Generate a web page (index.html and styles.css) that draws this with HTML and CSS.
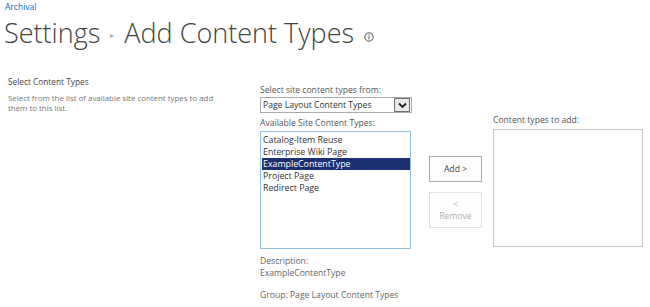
FILE: index.html
```html
<!DOCTYPE html>
<html lang="en">
<head>
    <meta charset="UTF-8">
    <meta name="viewport" content="width=device-width, initial-scale=1.0">
    <title>Add Content Types</title>
    <link rel="stylesheet" href="styles.css">
</head>
<body>
    <div class="crumb">Archival</div>
    <h1 class="title">
        <span>Settings</span>
        <span class="sep">&#9656;</span>
        <span>Add Content Types</span>
        <svg class="info" width="10" height="10" viewBox="0 0 10 10">
            <circle cx="5" cy="5" r="4.2" fill="none" stroke="#555" stroke-width="1"/>
            <rect x="4.5" y="4.2" width="1" height="3.2" fill="#555"/>
            <rect x="4.5" y="2.5" width="1" height="1" fill="#555"/>
        </svg>
    </h1>

    <div class="section">
        <div class="section-desc">
            <h3>Select Content Types</h3>
            <p>Select from the list of available site content types to add them to this list.</p>
        </div>
        <div class="section-body">
            <div class="pick">
                <div class="label">Select site content types from:</div>
                <div class="dropdown">
                    <span>Page Layout Content Types</span>
                    <span class="drop-btn">
                        <svg width="11" height="9" viewBox="0 0 11 9">
                            <path d="M2 2.5 L5.5 6 L9 2.5" fill="none" stroke="#222" stroke-width="1.8"/>
                        </svg>
                    </span>
                </div>
                <div class="label">Available Site Content Types:</div>
                <div class="listbox">
                    <div class="item">Catalog-Item Reuse</div>
                    <div class="item">Enterprise Wiki Page</div>
                    <div class="item selected">ExampleContentType</div>
                    <div class="item">Project Page</div>
                    <div class="item">Redirect Page</div>
                </div>
                <div class="meta">Description:<br>ExampleContentType</div>
                <div class="meta group">Group: Page Layout Content Types</div>
            </div>
            <div class="buttons">
                <button class="btn">Add &gt;</button>
                <button class="btn disabled">&lt;<br>Remove</button>
            </div>
            <div class="target">
                <div class="label">Content types to add:</div>
                <div class="listbox plain"></div>
            </div>
        </div>
    </div>
</body>
</html>
```

FILE: styles.css
```css
body {
    margin: 0;
    font-family: "Open Sans", sans-serif;
    color: #444;
    background: #fff;
}
.crumb {
    color: #0072c6;
    font-size: 8.5px;
    padding: 1px 0 0 5px;
}
.title {
    margin: 0;
    padding: 0 0 0 4px;
    font-weight: 300;
    font-size: 27px;
    line-height: 38px;
    color: #444;
    display: flex;
    align-items: center;
    gap: 8px;
}
.title .sep {
    font-size: 8px;
    color: #aaa;
    margin: 4px 2px 0;
}
.title .info {
    margin: 7px 0 0 2px;
}
.section {
    display: flex;
    margin-top: 22px;
}
.section-desc {
    width: 236px;
    padding-left: 8px;
    margin-right: 16px;
}
.section-desc h3 {
    margin: 0;
    font-weight: normal;
    font-size: 8.3px;
    color: #444;
    line-height: 11px;
}
.section-desc p {
    margin: 6px 0 0;
    font-size: 7.9px;
    line-height: 10px;
    color: #777;
    width: 220px;
}
.section-body {
    display: flex;
    padding-top: 9px;
}
.pick {
    width: 151px;
}
.label {
    font-size: 8.6px;
    line-height: 11px;
    color: #555;
}
.dropdown {
    display: flex;
    justify-content: space-between;
    align-items: center;
    width: 148px;
    height: 14px;
    border: 1px solid #ababab;
    font-size: 8.6px;
    color: #333;
    padding-left: 2px;
    margin: 1px 0 5px;
}
.drop-btn {
    width: 14px;
    height: 12px;
    border: 1px solid #707070;
    background: #e8e8e8;
    margin-right: 1px;
    display: flex;
    align-items: center;
    justify-content: center;
}
.listbox {
    height: 114px;
    border: 1px solid #92c0e0;
    padding: 2px 0 0 1px;
    margin-top: 2px;
}
.listbox.plain {
    width: 148px;
    height: 116px;
    border-color: #c6c6c6;
    padding: 0;
    margin-top: 3px;
}
.item {
    font-size: 8.8px;
    line-height: 12px;
    color: #333;
    padding-left: 1px;
}
.item.selected {
    background: #1c2f6e;
    color: #fff;
}
.meta {
    font-size: 8.6px;
    line-height: 12px;
    color: #666;
    margin-top: 6px;
}
.meta.group {
    margin-top: 10px;
}
.buttons {
    display: flex;
    flex-direction: column;
    gap: 10px;
    margin: 71px 11px 0 18px;
}
.btn {
    width: 53px;
    height: 26px;
    border: 1px solid #ababab;
    background: #fdfdfd;
    font-family: inherit;
    font-size: 8.6px;
    color: #444;
    padding: 0;
}
.btn.disabled {
    height: 36px;
    border-color: #e1e1e1;
    color: #b1b1b1;
    line-height: 12px;
}
.target {
    margin-top: 30px;
}
```
